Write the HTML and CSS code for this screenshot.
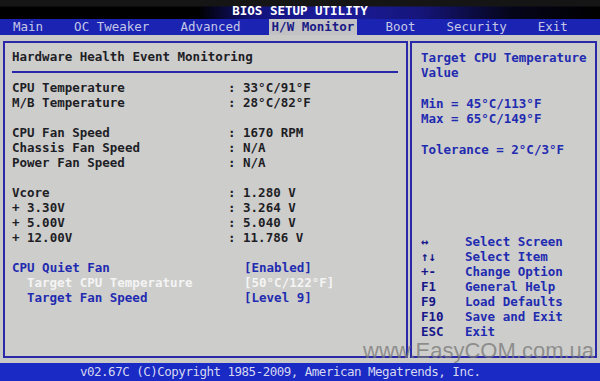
FILE: index.html
```html
<!DOCTYPE html>
<html lang="en">
<head>
  <meta charset="UTF-8" />
  <title>BIOS SETUP UTILITY</title>
  <link rel="stylesheet" href="styles.css">
</head>
<body>
  <div class="screen">
    <div class="title">BIOS SETUP UTILITY</div>

    <nav class="menu">
      <span>Main</span>
      <span>OC Tweaker</span>
      <span>Advanced</span>
      <span class="active">H/W Monitor</span>
      <span>Boot</span>
      <span>Security</span>
      <span>Exit</span>
    </nav>

    <main class="main">
      <section class="panel monitor">
        <h1>Hardware Health Event Monitoring</h1>

        <div class="group">
          <div class="row"><span>CPU Temperature</span><span>: 33°C/91°F</span></div>
          <div class="row"><span>M/B Temperature</span><span>: 28°C/82°F</span></div>
        </div>

        <div class="group">
          <div class="row"><span>CPU Fan Speed</span><span>: 1670 RPM</span></div>
          <div class="row"><span>Chassis Fan Speed</span><span>: N/A</span></div>
          <div class="row"><span>Power Fan Speed</span><span>: N/A</span></div>
        </div>

        <div class="group">
          <div class="row"><span>Vcore</span><span>: 1.280 V</span></div>
          <div class="row"><span>+ 3.30V</span><span>: 3.264 V</span></div>
          <div class="row"><span>+ 5.00V</span><span>: 5.040 V</span></div>
          <div class="row"><span>+ 12.00V</span><span>: 11.786 V</span></div>
        </div>

        <div class="group">
          <div class="row option"><span>CPU Quiet Fan</span><span class="setting">[Enabled]</span></div>
          <div class="row option disabled sub"><span>Target CPU Temperature</span><span class="setting">[50°C/122°F]</span></div>
          <div class="row option sub"><span>Target Fan Speed</span><span class="setting">[Level 9]</span></div>
        </div>
      </section>

      <aside class="panel help">
        <div class="help-text">
          <p>Target CPU Temperature<br>Value</p>
          <p>Min = 45°C/113°F<br>Max = 65°C/149°F</p>
          <p>Tolerance = 2°C/3°F</p>
        </div>

        <div class="keys">
          <div class="key"><span>↔</span><span>Select Screen</span></div>
          <div class="key"><span>↑↓</span><span>Select Item</span></div>
          <div class="key"><span>+-</span><span>Change Option</span></div>
          <div class="key"><span>F1</span><span>General Help</span></div>
          <div class="key"><span>F9</span><span>Load Defaults</span></div>
          <div class="key"><span>F10</span><span>Save and Exit</span></div>
          <div class="key"><span>ESC</span><span>Exit</span></div>
        </div>
      </aside>
    </main>

    <footer class="footer">v02.67C (C)Copyright 1985-2009, American Megatrends, Inc.</footer>

    <div class="watermark">www.EasyCOM.com.ua</div>
  </div>
</body>
</html>
```

FILE: styles.css
```css
* {
  box-sizing: border-box;
  margin: 0;
  padding: 0;
}

body {
  background: #000;
  font-family: "DejaVu Sans Mono", "Liberation Mono", monospace;
  font-size: 12.5px;
  font-weight: bold;
}

.screen {
  width: 600px;
  height: 381px;
  position: relative;
  overflow: hidden;
  background: #c9c9c7;
}

/* top title */
.title {
  height: 19px;
  padding-top: 2px;
  line-height: 17px;
  text-align: center;
  color: #fff;
  background:
    linear-gradient(to bottom, #151515 0, #151515 6px, transparent 7px),
    linear-gradient(to right, #000 0%, #000 33%, #12127a 42%, #1c1c9e 55%, #15157a 70%, #05051a 85%, #000 100%);
}

/* menu bar */
.menu {
  height: 16px;
  display: flex;
  gap: 25px;
  padding-left: 10px;
  background: #1b23b3;
  color: #c4c8e6;
  font-weight: normal;
  line-height: 16px;
}

.menu span {
  padding: 0 3px;
}

.menu .active {
  background: #c2c2c4;
  color: #1a1a86;
  font-weight: bold;
}

/* main area */
.main {
  height: 328px;
  display: flex;
  gap: 2px;
  padding: 6px 3px 0 3px;
}

.panel {
  height: 317px;
  border: 2px solid #2828a8;
  background: #cdcdcb;
  line-height: 15px;
}

.monitor {
  width: 405px;
  padding: 6px 8px 0 7px;
  color: #1e1e26;
}

.monitor h1 {
  font-size: 12.5px;
  padding-bottom: 7px;
  border-bottom: 2px solid #2828a8;
  margin-bottom: 7px;
}

.group {
  margin-bottom: 15px;
}

.row {
  display: grid;
  grid-template-columns: 216px auto;
  white-space: pre;
}

.row.sub span:first-child {
  padding-left: 15px;
}

.row .setting {
  padding-left: 16px;
}

.option {
  color: #1f2bb0;
}

.option.disabled {
  color: #f4f4f4;
}

/* help panel */
.help {
  width: 187px;
  padding: 7px 6px 17px 9px;
  display: flex;
  flex-direction: column;
  color: #1f2bb0;
  line-height: 15.3px;
}

.help-text p {
  margin-bottom: 15.3px;
}

.keys {
  margin-top: auto;
  line-height: 15px;
}

.key {
  display: grid;
  grid-template-columns: 44px auto;
}

.key span:first-child {
  color: #16168a;
}

/* bottom bar */
.footer {
  height: 18px;
  padding-left: 80px;
  line-height: 18px;
  background: #1a2ac4;
  color: #d6d8f0;
  font-weight: normal;
  letter-spacing: -0.5px;
}

.watermark {
  position: absolute;
  left: 363px;
  top: 342px;
  font-family: "Liberation Sans", Arial, sans-serif;
  font-size: 22px;
  line-height: 18px;
  font-weight: normal;
  color: rgba(120, 120, 120, 0.75);
}
```
